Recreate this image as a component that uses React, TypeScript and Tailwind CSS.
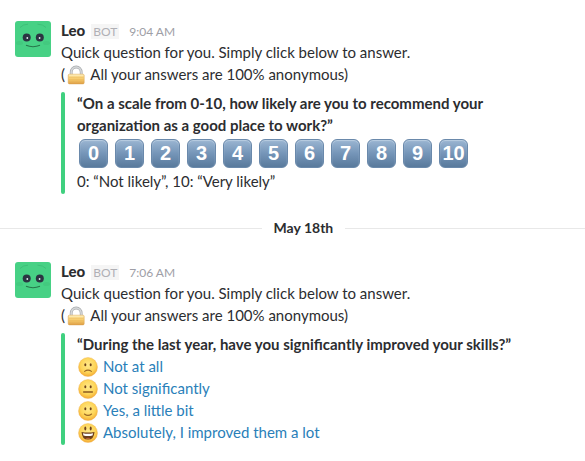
import { ReactNode } from "react";

type Mood = "sad" | "neutral" | "smile" | "grin";

type MessageProps = {
  time: string;
  children: ReactNode;
};

const scores = ["0", "1", "2", "3", "4", "5", "6", "7", "8", "9", "10"];

const answers: { mood: Mood; label: string }[] = [
  { mood: "sad", label: "Not at all" },
  { mood: "neutral", label: "Not significantly" },
  { mood: "smile", label: "Yes, a little bit" },
  { mood: "grin", label: "Absolutely, I improved them a lot" },
];

function LeoAvatar() {
  return (
    <svg viewBox="0 0 36 36" className="h-9 w-9 shrink-0" role="img" aria-label="Leo">
      <rect width="36" height="36" rx="3" fill="#47d185" />
      <path d="M5 6.5Q8 3.2 13 3.2M22.5 3.2Q28 3.2 31 6.5" fill="none" stroke="#3bbb75" strokeWidth="0.8" />
      <ellipse cx="4.5" cy="22" rx="3.5" ry="2" fill="#43c97f" />
      <ellipse cx="31.5" cy="22" rx="3.5" ry="2" fill="#43c97f" />
      <circle cx="11.7" cy="16.6" r="4" fill="#2b3442" />
      <circle cx="24.8" cy="16.6" r="4" fill="#2b3442" />
      <circle cx="12.3" cy="17" r="0.9" fill="#e6eef0" />
      <circle cx="24.6" cy="17" r="0.9" fill="#e6eef0" />
      <path d="M11 24.3Q18 27.2 25 24.3" fill="none" stroke="#27774b" strokeWidth="1.1" />
    </svg>
  );
}

function LockIcon() {
  return (
    <svg viewBox="0 -1 22 22" className="inline-block h-[22px] w-[22px] align-top" aria-hidden="true">
      <defs>
        <linearGradient id="lockBody" x1="0" y1="0" x2="0" y2="1">
          <stop offset="0" stopColor="#fbe3a0" />
          <stop offset="0.5" stopColor="#f6cb6c" />
          <stop offset="1" stopColor="#dfa047" />
        </linearGradient>
      </defs>
      <path d="M6.2 12V8.2a5 5.2 0 0 1 10 0V12" fill="none" stroke="#a9abae" strokeWidth="2.8" />
      <path d="M6.2 12V8.2a5 5.2 0 0 1 10 0V12" fill="none" stroke="#d5d8da" strokeWidth="1.5" />
      <rect x="3.2" y="10.2" width="16" height="9.7" rx="1.2" fill="url(#lockBody)" stroke="#d9a04e" strokeWidth="0.5" />
      <path d="M4 11.2h14.4" stroke="#fff1c4" strokeWidth="0.8" />
      <path d="M4 13.5h14.4M4 15.5h14.4M4 17.5h14.4" stroke="#e9b55c" strokeWidth="0.4" />
    </svg>
  );
}

function Face({ mood }: { mood: Mood }) {
  return (
    <svg viewBox="0 -1 22 22" className="h-[22px] w-[22px] shrink-0" aria-hidden="true">
      <defs>
        <radialGradient id="faceFill" cx="0.5" cy="0.4" r="0.6">
          <stop offset="0" stopColor="#ffe98a" />
          <stop offset="0.65" stopColor="#fdd456" />
          <stop offset="1" stopColor="#f3aa35" />
        </radialGradient>
      </defs>
      <circle cx="11" cy="11" r="9.5" fill="url(#faceFill)" stroke="#f0b04a" strokeWidth="0.4" />
      <ellipse cx="8.3" cy={mood === "grin" ? 6.4 : 8.8} rx="1" ry={mood === "grin" ? 2 : 1.5} fill="#70431b" />
      <ellipse cx="13.7" cy={mood === "grin" ? 6.4 : 8.8} rx="1" ry={mood === "grin" ? 2 : 1.5} fill="#70431b" />
      {mood === "sad" && (
        <path d="M7.6 15.4Q11 12.8 14.4 15.4" fill="none" stroke="#9a6826" strokeWidth="1.1" strokeLinecap="round" />
      )}
      {mood === "neutral" && (
        <path d="M6.6 14h8.8" stroke="#8a5a22" strokeWidth="1.3" strokeLinecap="round" />
      )}
      {mood === "smile" && (
        <path d="M7.4 14Q11 16.8 14.6 14" fill="none" stroke="#9a6826" strokeWidth="1.1" strokeLinecap="round" />
      )}
      {mood === "grin" && (
        <>
          <path d="M4.5 9.9Q11 11.3 17.5 9.9Q17 17.6 11 17.6T4.5 9.9Z" fill="#6d3f1b" />
          <path d="M5.9 11.2Q11 12.3 16.1 11.2L15.5 13.5Q11 14.5 6.5 13.5Z" fill="#fff" />
          <path d="M8.4 16.4Q11 15 13.6 16.4Q11 17.6 8.4 16.4Z" fill="#b9603a" />
        </>
      )}
    </svg>
  );
}

function Message({ time, children }: MessageProps) {
  return (
    <article className="flex gap-2.5 px-[15px]">
      <div className="pt-0.5">
        <LeoAvatar />
      </div>
      <div className="min-w-0 flex-1">
        <header className="flex h-[22px] items-baseline">
          <span className="font-black">Leo</span>
          <span className="ml-1.5 bg-[#f5f5f5] px-0.5 text-xs leading-[15px] text-[#b0b0b5]">BOT</span>
          <time className="ml-2.5 text-xs text-[#9e9ea6]">{time}</time>
        </header>
        <p>Quick question for you. Simply click below to answer.</p>
        <p>
          (<LockIcon /> All your answers are 100% anonymous)
        </p>
        <div className="mt-[7px] flex gap-3">
          <div className="w-1 shrink-0 rounded-full bg-[#3fd07f]" />
          <div className="min-w-0 flex-1 pb-0.5">{children}</div>
        </div>
      </div>
    </article>
  );
}

export default function App() {
  return (
    <main className="bg-white pt-[19px] pb-4 font-['Lato',sans-serif] text-[15px] leading-[22px] text-[#2c2d30]">
      <Message time="9:04 AM">
        <p className="max-w-[440px] font-bold">
          “On a scale from 0-10, how likely are you to recommend your organization as a good place to work?”
        </p>
        <div className="flex min-h-[34px] flex-wrap items-center gap-x-[3px]">
          {scores.map((score) => (
            <button key={score} type="button" className="flex h-[34px] w-[33px] items-center justify-center">
              <span className="flex h-[29px] w-[29px] items-center justify-center rounded-md border border-[#6a89ab] bg-linear-to-b from-[#9bb6d2] via-[#7595b8] to-[#597a9c] font-['Liberation_Sans',sans-serif] text-xl font-bold text-white inset-shadow-[0_1px_1px_#b9cde0]">
                {score}
              </span>
            </button>
          ))}
        </div>
        <p>0: “Not likely”, 10: “Very likely”</p>
      </Message>

      <div className="mt-[23px] mb-[21px] flex items-center gap-3">
        <hr className="flex-12 border-[#e8e8e8]" />
        <h2 className="text-sm leading-[22px] font-bold">May 18th</h2>
        <hr className="flex-11 border-[#e8e8e8]" />
      </div>

      <Message time="7:06 AM">
        <p className="font-bold">“During the last year, have you significantly improved your skills?”</p>
        <ul>
          {answers.map(({ mood, label }) => (
            <li key={mood}>
              <a href="#" className="flex gap-1 text-[#2a80b9] hover:underline">
                <Face mood={mood} />
                {label}
              </a>
            </li>
          ))}
        </ul>
      </Message>
    </main>
  );
}
